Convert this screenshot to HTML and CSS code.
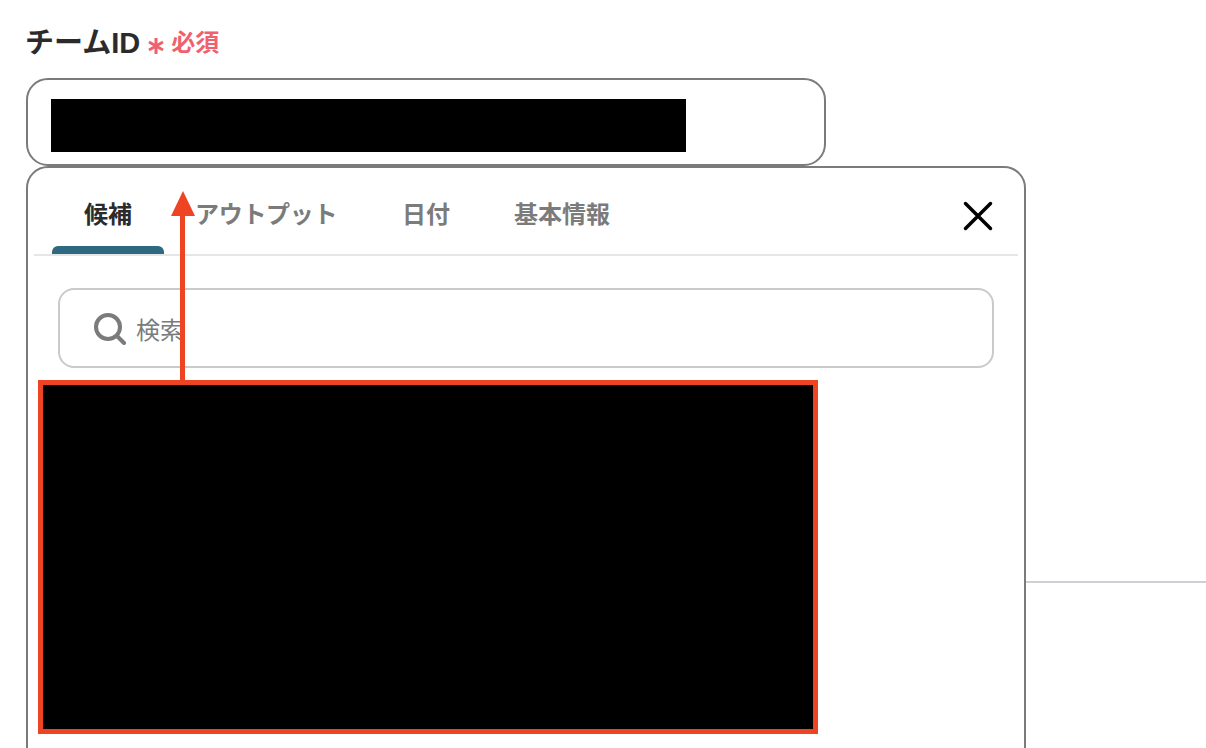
FILE: index.html
```html
<!DOCTYPE html>
<html lang="ja">
<head>
    <meta charset="UTF-8">
    <title>チームID</title>
    <link rel="stylesheet" href="styles.css">
</head>
<body>
    <div class="page">
        <div class="field">
            <div class="field-label">
                <span class="label-text">チームID</span>
                <svg class="required-mark" width="18" height="18" viewBox="0 0 18 18"><path d="M9 1V17M2 5L16 13M16 5L2 13"/></svg>
                <span class="required-text">必須</span>
            </div>
            <div class="field-input">
                <div class="redacted-value"></div>
            </div>

            <div class="popover">
                <div class="tabs">
                    <div class="tab tab-candidates active">候補</div>
                    <div class="tab tab-output">アウトプット</div>
                    <div class="tab tab-date">日付</div>
                    <div class="tab tab-basic">基本情報</div>
                    <svg class="close-icon" width="30" height="30" viewBox="0 0 30 30"><path d="M2.500 2.500L27.500 27.500M27.500 2.500L2.500 27.500"/></svg>
                </div>
                <div class="search-box">
                    <svg class="search-icon" width="34" height="34" viewBox="0 0 34 34"><circle cx="15" cy="16" r="12"/><path d="M24 25L31 32"/></svg>
                    <span class="search-text">検索</span>
                </div>
                <div class="candidates"></div>
            </div>
        </div>
        <div class="section-line"></div>

        <!-- annotation drawn on top of the screenshot -->
        <div class="note-box"></div>
        <div class="note-arrow"></div>
    </div>
</body>
</html>
```

FILE: styles.css
```css
* {
    box-sizing: border-box;
}

body {
    margin: 0;
    background: #fff;
    font-family: "Noto Sans CJK JP", "Noto Sans", sans-serif;
}

.page {
    position: relative;
    width: 1206px;
    height: 748px;
    overflow: hidden;
}

.field {
    position: relative;
    width: 800px;
    margin-left: 26px;
    padding-top: 20px;
}

.field-label {
    display: flex;
    align-items: center;
    height: 40px;
}

.label-text {
    margin-left: -1px;
    font-family: "Liberation Sans", "Noto Sans CJK JP", sans-serif;
    font-size: 29px;
    font-weight: 700;
    color: #2b2b2b;
}

.required-mark {
    margin: 12px 0 0 7px;
}

.required-mark path {
    fill: none;
    stroke: #f0616d;
    stroke-width: 3;
}

.required-text {
    margin-left: 6px;
    font-size: 24px;
    font-weight: 700;
    color: #f0616d;
}

.field-input {
    height: 88px;
    margin-top: 18px;
    padding: 19px 0 0 23px;
    border: 2px solid #7b7b7b;
    border-radius: 22px;
}

.redacted-value {
    width: 635px;
    height: 53px;
    background: #000;
}

.popover {
    position: absolute;
    top: 166px;
    left: 0;
    width: 1000px;
    height: 640px;
    padding: 0 6px;
    background: #fff;
    border: 2px solid #7b7b7b;
    border-radius: 22px;
}

.tabs {
    position: relative;
    display: flex;
    align-items: center;
    height: 88px;
    border-bottom: 2px solid #e6e6e6;
    font-size: 24px;
    font-weight: 700;
    color: #7b7b7b;
}

.tab {
    position: absolute;
    top: 27px;
    line-height: 36px;
    white-space: nowrap;
}

.tab-candidates { left: 50px; }
.tab-output { left: 161px; letter-spacing: -0.3px; }
.tab-date { left: 368px; }
.tab-basic { left: 480px; }

.tab.active {
    color: #2b2b2b;
}

.tab.active::after {
    content: "";
    position: absolute;
    left: -32px;
    top: 51px;
    width: 112px;
    height: 8px;
    background: #2e6881;
    border-radius: 6px 6px 0 0;
}

.close-icon {
    position: absolute;
    right: 25px;
    top: 33px;
}

.close-icon path {
    fill: none;
    stroke: #000;
    stroke-width: 3.500;
    stroke-linecap: round;
}

.search-box {
    display: flex;
    align-items: center;
    height: 80px;
    margin: 32px 24px 0;
    padding-left: 33px;
    border: 2px solid #cacaca;
    border-radius: 16px;
}

.search-icon {
    flex: none;
}

.search-icon circle,
.search-icon path {
    fill: none;
    stroke: #7b7b7b;
    stroke-width: 4;
    stroke-linecap: round;
}

.search-text {
    margin-left: 9px;
    font-size: 24px;
    color: #7b7b7b;
}

.section-line {
    height: 2px;
    margin: 415px 0 0 1026px;
    background: #cdd1d5;
}

.note-box {
    position: absolute;
    left: 38px;
    top: 380px;
    width: 780px;
    height: 354px;
    background: #000;
    border: 5px solid #ee4423;
}

.note-arrow {
    position: absolute;
    left: 180px;
    top: 215px;
    width: 5px;
    height: 165px;
    background: #ee4423;
}

.note-arrow::before {
    content: "";
    position: absolute;
    left: -9px;
    top: -24px;
    border-left: 12px solid transparent;
    border-right: 12px solid transparent;
    border-bottom: 25px solid #ee4423;
}
```
